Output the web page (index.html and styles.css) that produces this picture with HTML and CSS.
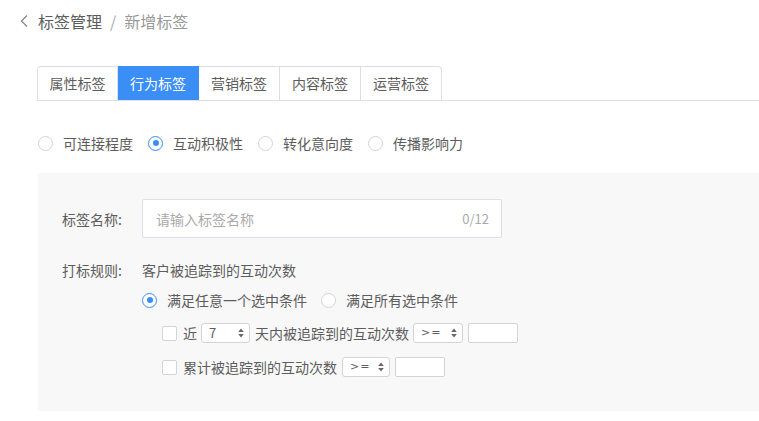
FILE: index.html
```html
<!DOCTYPE html>
<html lang="zh">
<head>
<meta charset="utf-8">
<title>新增标签</title>
<link rel="stylesheet" href="styles.css">
</head>
<body>
<div class="page">
  <div class="crumb">
    <svg class="back" width="10" height="14" viewBox="0 0 10 14"><polyline points="8,1.5 2.5,7 8,12.5" fill="none" stroke="#888" stroke-width="1.3"/></svg>
    <span class="crumb-parent">标签管理</span>
    <span class="crumb-sep">/</span>
    <span class="crumb-cur">新增标签</span>
  </div>

  <div class="tabs">
    <div class="tab first">属性标签</div>
    <div class="tab active">行为标签</div>
    <div class="tab">营销标签</div>
    <div class="tab">内容标签</div>
    <div class="tab last">运营标签</div>
  </div>

  <div class="types">
    <label class="radio"><span class="dot"></span>可连接程度</label>
    <label class="radio on"><span class="dot"></span>互动积极性</label>
    <label class="radio"><span class="dot"></span>转化意向度</label>
    <label class="radio"><span class="dot"></span>传播影响力</label>
  </div>

  <div class="panel">
    <div class="row name-row">
      <div class="label">标签名称:</div>
      <div class="input">
        <span class="ph">请输入标签名称</span>
        <span class="count">0/12</span>
      </div>
    </div>
    <div class="row rule-row">
      <div class="label">打标规则:</div>
      <div class="value">客户被追踪到的互动次数</div>
    </div>
    <div class="sub radios">
      <label class="radio on"><span class="dot"></span>满足任意一个选中条件</label>
      <label class="radio"><span class="dot"></span>满足所有选中条件</label>
    </div>
    <div class="sub cond c1">
      <span class="check"></span>
      <span class="txt">近</span>
      <span class="sel w49"><span class="v">7</span><svg class="arr" width="6" height="10" viewBox="0 0 6 10"><path d="M3 0.5 L5.8 4 H0.2 Z M3 9.5 L5.8 6 H0.2 Z" fill="#666"/></svg></span>
      <span class="txt">天内被追踪到的互动次数</span>
      <span class="sel w50"><span class="v op">&gt;=</span><svg class="arr" width="6" height="10" viewBox="0 0 6 10"><path d="M3 0.5 L5.8 4 H0.2 Z M3 9.5 L5.8 6 H0.2 Z" fill="#666"/></svg></span>
      <span class="box"></span>
    </div>
    <div class="sub cond c2">
      <span class="check"></span>
      <span class="txt">累计被追踪到的互动次数</span>
      <span class="sel w48"><span class="v op">&gt;=</span><svg class="arr" width="6" height="10" viewBox="0 0 6 10"><path d="M3 0.5 L5.8 4 H0.2 Z M3 9.5 L5.8 6 H0.2 Z" fill="#666"/></svg></span>
      <span class="box"></span>
    </div>
  </div>
</div>
</body>
</html>
```

FILE: styles.css
```css
* { box-sizing: border-box; }
html, body { margin: 0; padding: 0; background: #fff; }
body {
  font-family: "Noto Sans CJK SC", "Noto Sans", "Liberation Sans", sans-serif;
  font-size: 14px;
  color: #5c5c5c;
  width: 759px;
  height: 421px;
  overflow: hidden;
}
.page { padding-top: 11px; }

.crumb {
  display: flex;
  align-items: center;
  height: 20px;
  padding-left: 19px;
  font-size: 16px;
  line-height: 20px;
}
.back { margin-right: 9px; }
.crumb-parent { color: #5c5c5c; }
.crumb-sep { color: #aaa; margin: 0 8px 0 8px; }
.crumb-cur { color: #999; }

.tabs {
  display: flex;
  margin-top: 35px;
  margin-left: 37px;
  height: 35px;
  border-bottom: 1px solid #dcdfe6;
}
.tab {
  width: 81px;
  height: 34px;
  line-height: 33px;
  text-align: center;
  border-top: 1px solid #dcdfe6;
  border-right: 1px solid #dcdfe6;
  color: #5c5c5c;
  font-size: 14px;
}
.tab.first { border-left: 1px solid #dcdfe6; border-top-left-radius: 4px; }
.tab.last { border-top-right-radius: 4px; }
.tab.active {
  background: #3a8ef6;
  border-color: #3a8ef6;
  color: #fff;
}

.types {
  display: flex;
  align-items: center;
  gap: 15px;
  margin-top: 32px;
  margin-left: 38px;
  height: 20px;
}
.radio {
  display: flex;
  align-items: center;
  gap: 10px;
  line-height: 20px;
  color: #5c5c5c;
}
.dot {
  width: 15px;
  height: 15px;
  border: 1px solid #d4d4d4;
  border-radius: 50%;
  background: #fff;
  position: relative;
  flex: none;
}
.radio.on .dot { border-color: #3a8ef6; }
.radio.on .dot::after {
  content: "";
  position: absolute;
  left: 3.5px;
  top: 3.5px;
  width: 6px;
  height: 6px;
  border-radius: 50%;
  background: #3a8ef6;
}

.panel {
  margin-top: 20px;
  margin-left: 38px;
  background: #f8f8f8;
  height: 238px;
  padding: 26px 0 0 24px;
}
.row { display: flex; align-items: center; }
.label { width: 80px; flex: none; color: #5c5c5c; }
.input {
  width: 360px;
  height: 39px;
  background: #fff;
  border: 1px solid #dcdfe6;
  border-radius: 2px;
  display: flex;
  align-items: center;
  justify-content: space-between;
  padding: 0 12px 0 13px;
}
.ph { color: #aaa; }
.count { color: #aaa; font-size: 13px; }

.rule-row { margin-top: 22px; height: 20px; line-height: 20px; }
.value { color: #5c5c5c; }

.sub { margin-left: 80px; display: flex; align-items: center; }
.radios { margin-top: 10px; height: 20px; gap: 14px; }
.cond { margin-left: 100px; height: 20px; }
.c1 { margin-top: 13px; }
.c2 { margin-top: 14px; }

.check {
  width: 15px;
  height: 15px;
  border: 1px solid #d4d4d4;
  border-radius: 2px;
  background: #fff;
  margin-right: 6px;
  flex: none;
}
.txt { line-height: 20px; color: #5c5c5c; }
.sel {
  height: 20px;
  background: #fff;
  border: 1px solid #d4d4d4;
  border-radius: 3px;
  display: flex;
  align-items: center;
  justify-content: space-between;
  padding: 0 5px 0 7px;
  font-size: 13px;
  color: #5c5c5c;
  margin: 0 5px;
  flex: none;
}
.w49 { width: 49px; margin-left: 4px; }
.w50 { width: 50px; margin-left: 4px; }
.w48 { width: 48px; margin-left: 5px; }
.v { line-height: 18px; }
.v.op { font-size: 11px; letter-spacing: 1px; font-family: "DejaVu Sans", sans-serif; }
.arr { display: block; }
.box {
  width: 50px;
  height: 20px;
  background: #fff;
  border: 1px solid #d4d4d4;
  border-radius: 2px;
  flex: none;
}
```
